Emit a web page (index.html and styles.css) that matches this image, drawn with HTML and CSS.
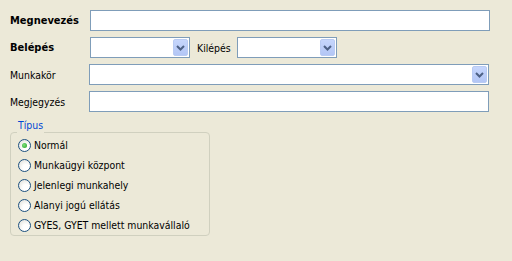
FILE: index.html
```html
<!DOCTYPE html>
<html lang="hu">
<head>
  <meta charset="UTF-8">
  <title>Munkaviszony</title>
  <link rel="stylesheet" href="styles.css">
</head>
<body>

  <div class="form">
    <div class="row">
      <label class="lbl bold">Megnevezés</label>
      <div class="box wide"></div>
    </div>

    <div class="row">
      <label class="lbl bold">Belépés</label>
      <div class="box combo small">
        <span class="arrow"><svg width="9" height="6" viewBox="0 0 9 6"><path d="M1 1 L4.5 4.5 L8 1" fill="none" stroke="#4d6185" stroke-width="2"/></svg></span>
      </div>
      <label class="lbl2">Kilépés</label>
      <div class="box combo small">
        <span class="arrow"><svg width="9" height="6" viewBox="0 0 9 6"><path d="M1 1 L4.5 4.5 L8 1" fill="none" stroke="#4d6185" stroke-width="2"/></svg></span>
      </div>
    </div>

    <div class="row shift">
      <label class="lbl">Munkakör</label>
      <div class="box combo wide">
        <span class="arrow"><svg width="9" height="6" viewBox="0 0 9 6"><path d="M1 1 L4.5 4.5 L8 1" fill="none" stroke="#4d6185" stroke-width="2"/></svg></span>
      </div>
    </div>

    <div class="row shift">
      <label class="lbl">Megjegyzés</label>
      <div class="box wide"></div>
    </div>
  </div>

  <fieldset class="group">
    <legend>Típus</legend>
    <label class="opt first"><span class="radio checked"></span>Normál</label>
    <label class="opt"><span class="radio"></span>Munkaügyi központ</label>
    <label class="opt"><span class="radio"></span>Jelenlegi munkahely</label>
    <label class="opt"><span class="radio"></span>Alanyi jogú ellátás</label>
    <label class="opt"><span class="radio"></span>GYES, GYET mellett munkavállaló</label>
  </fieldset>

</body>
</html>
```
FILE: styles.css
```css
body {
  margin: 0;
  padding: 10px 0 0 10px;
  background: #ece9d8;
  font-family: Tahoma, "DejaVu Sans Condensed", sans-serif;
  font-size: 10.4px;
  color: #000;
}
.form {
  display: flex;
  flex-direction: column;
  gap: 6px;
}
.row {
  display: flex;
  align-items: center;
  height: 21px;
}
.lbl {
  width: 80px;
  flex: none;
}
.shift .lbl {
  width: 79px;
}
.bold {
  font-size: 11px;
  font-weight: bold;
}
.lbl2 {
  margin: 0 6px 0 7px;
  width: 34px;
}
.box {
  box-sizing: border-box;
  height: 21px;
  background: #fff;
  border: 1px solid #7f9db9;
  position: relative;
}
.wide {
  width: 400px;
}
.small {
  width: 100px;
}
.arrow {
  position: absolute;
  right: 1px;
  top: 1px;
  width: 15px;
  height: 17px;
  box-sizing: border-box;
  border: 1px solid #b9cbf3;
  border-radius: 2px;
  background: linear-gradient(to bottom, #c6d6fc, #b3c6f5);
  display: flex;
  align-items: center;
  justify-content: center;
}
.group {
  margin: 7px 0 0 0;
  width: 200px;
  box-sizing: border-box;
  height: 117px;
  border: 1px solid #d0d0bf;
  border-radius: 4px;
  padding: 0 0 0 7px;
}
.group legend {
  color: #0046d5;
  line-height: 13px;
  padding: 0 1px 13px 1px;
  margin-left: -1px;
}
.opt {
  display: flex;
  align-items: center;
  height: 20px;
  gap: 3px;
}
.opt.first {
  margin-top: -10px;
}
.radio {
  width: 13px;
  height: 13px;
  box-sizing: border-box;
  border-radius: 50%;
  border: 1px solid #1c5180;
  background: radial-gradient(circle at 65% 70%, #ffffff 30%, #dcdcd4 100%);
  display: flex;
  align-items: center;
  justify-content: center;
}
.radio.checked::after {
  content: "";
  width: 5px;
  height: 5px;
  border-radius: 50%;
  background: radial-gradient(circle at 40% 40%, #7fe07f, #21a121);
}
```
